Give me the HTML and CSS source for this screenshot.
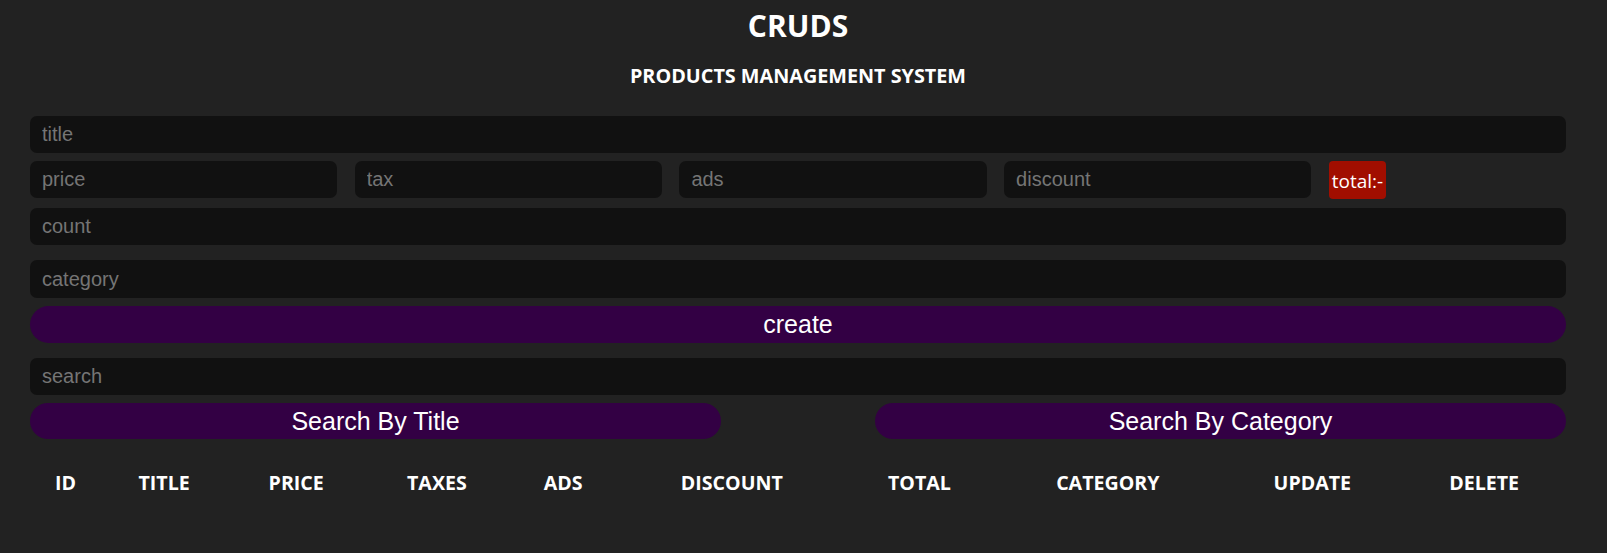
FILE: index.html
```html
<!DOCTYPE html>
<html lang="en">
<head>
<meta charset="utf-8">
<title>CRUDS</title>
<link rel="stylesheet" href="styles.css">
</head>
<body>
<div class="crud">
  <header class="head">
    <h1>CRUDS</h1>
    <h3>PRODUCTS MANAGEMENT SYSTEM</h3>
  </header>
  <div class="inputs">
    <input class="field title" type="text" placeholder="title">
    <div class="price-row">
      <input class="field" type="number" placeholder="price">
      <input class="field" type="number" placeholder="tax">
      <input class="field" type="number" placeholder="ads">
      <input class="field" type="number" placeholder="discount">
      <small class="total">total:-</small>
    </div>
    <input class="field count" type="number" placeholder="count">
    <input class="field category" type="text" placeholder="category">
    <button class="btn create">create</button>
  </div>
  <div class="search-block">
    <input class="field search" type="text" placeholder="search">
    <div class="search-btns">
      <button class="btn half">Search By Title</button>
      <button class="btn half">Search By Category</button>
    </div>
  </div>
  <table class="outputs">
    <colgroup>
      <col class="w-id"><col class="w-title"><col class="w-price"><col class="w-taxes"><col class="w-ads">
      <col class="w-discount"><col class="w-total"><col class="w-category"><col class="w-update"><col class="w-delete">
    </colgroup>
    <thead>
      <tr>
        <th>ID</th><th>TITLE</th><th>PRICE</th><th>TAXES</th><th>ADS</th>
        <th>DISCOUNT</th><th>TOTAL</th><th>CATEGORY</th><th>UPDATE</th><th>DELETE</th>
      </tr>
    </thead>
    <tbody></tbody>
  </table>
</div>
</body>
</html>
```

FILE: styles.css
```css
* { box-sizing: border-box; }

body {
  margin: 0;
  background: #222222;
  color: #ffffff;
  font-family: "Open Sans", "Noto Sans", sans-serif;
}

.crud {
  width: 1536px;
  margin-left: 30px;
}

.head {
  text-align: center;
}

.head h1 {
  margin: 6px 0 0;
  font-size: 30px;
  line-height: 40px;
  font-weight: 700;
}

.head h3 {
  margin: 17px 0 0;
  font-size: 19.8px;
  line-height: 26px;
  font-weight: 700;
}

.inputs {
  display: flex;
  flex-direction: column;
  margin-top: 27px;
}

.field {
  display: block;
  width: 100%;
  height: 37px;
  border: none;
  outline: none;
  background: #111111;
  color: #ffffff;
  border-radius: 7px;
  padding: 0 12px;
  font-family: "Liberation Sans", Arial, sans-serif;
  font-size: 20px;
}

.field::placeholder {
  color: #757575;
}

.field::-webkit-outer-spin-button,
.field::-webkit-inner-spin-button {
  -webkit-appearance: none;
  margin: 0;
}

.price-row {
  display: flex;
  align-items: flex-start;
  gap: 17.5px;
  margin-top: 8px;
  height: 38px;
}

.price-row .field {
  flex: none;
  width: 307.2px;
}

.total {
  display: block;
  background: #a10e00;
  color: #ffffff;
  border-radius: 4px;
  padding: 6.5px 3px 5.5px;
  font-size: 19px;
  line-height: 26px;
  font-family: "Open Sans", "Noto Sans", sans-serif;
}

.count { margin-top: 9px; }
.category { margin-top: 15px; height: 38px; }

.btn {
  display: block;
  border: none;
  outline: none;
  background: #330044;
  color: #ffffff;
  font-family: "Liberation Sans", Arial, sans-serif;
  font-size: 25px;
  border-radius: 20px;
  cursor: pointer;
  padding: 0;
}

.create {
  width: 100%;
  height: 37.5px;
  margin-top: 7.5px;
}

.search-block {
  margin-top: 15px;
}

.search-btns {
  display: flex;
  justify-content: space-between;
  margin-top: 8.3px;
}

.half {
  width: 691px;
  height: 36px;
}

.outputs {
  width: 100%;
  table-layout: fixed;
  border-collapse: collapse;
  margin-top: 30.5px;
}

.outputs th {
  padding: 0;
  font-size: 19.6px;
  line-height: 26px;
  font-weight: 700;
  text-align: center;
}

.w-id { width: 71.2px; }
.w-title { width: 125.6px; }
.w-price { width: 138.4px; }
.w-taxes { width: 142.8px; }
.w-ads { width: 109.4px; }
.w-discount { width: 227.8px; }
.w-total { width: 147.2px; }
.w-category { width: 229.2px; }
.w-update { width: 179.6px; }
.w-delete { width: 163.6px; }
```
